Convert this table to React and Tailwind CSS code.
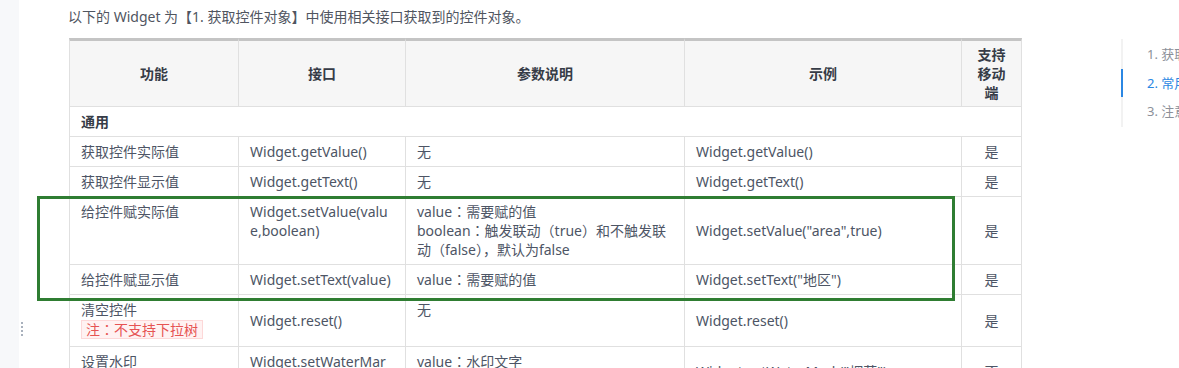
import React from 'react';

const rows = [
  {
    name: '获取控件实际值',
    api: ['Widget.getValue()'],
    params: ['无'],
    example: 'Widget.getValue()',
    mobile: '是',
  },
  {
    name: '获取控件显示值',
    api: ['Widget.getText()'],
    params: ['无'],
    example: 'Widget.getText()',
    mobile: '是',
  },
  {
    name: '给控件赋实际值',
    api: ['Widget.setValue(valu', 'e,boolean)'],
    params: ['value：需要赋的值', 'boolean：触发联动（true）和不触发联', '动（false），默认为false'],
    example: 'Widget.setValue("area",true)',
    mobile: '是',
  },
  {
    name: '给控件赋显示值',
    api: ['Widget.setText(value)'],
    params: ['value：需要赋的值'],
    example: 'Widget.setText("地区")',
    mobile: '是',
  },
  {
    name: '清空控件',
    note: '注：不支持下拉树',
    api: ['Widget.reset()'],
    apiMiddle: true,
    params: ['无'],
    example: 'Widget.reset()',
    mobile: '是',
  },
  {
    name: '设置水印',
    api: ['Widget.setWaterMar', 'k(value)'],
    params: ['value：水印文字'],
    example: 'Widget.setWaterMark("烟草")',
    mobile: '否',
  },
];

const cell = 'border-r border-b border-[#e0e0e0] px-[11px] py-[5px] leading-[19px]';

// full-width colon centred in its box
function Punct({ text }) {
  const parts = text.split('：');
  return parts.map((p, i) => (
    <React.Fragment key={i}>
      {i > 0 && <span style={{ fontFamily: '"Noto Sans CJK JP", sans-serif' }}>：</span>}
      {p}
    </React.Fragment>
  ));
}

function Lines({ items }) {
  return items.map((t, i) => (
    <React.Fragment key={i}>
      {i > 0 && <br />}
      <Punct text={t} />
    </React.Fragment>
  ));
}

export default function App() {
  return (
    <div
      className="relative flex w-[1179px] h-[368px] overflow-hidden bg-white text-[14px] text-[#4d5565]"
      style={{ fontFamily: '"Noto Sans", "Noto Sans CJK SC", sans-serif' }}
    >
      {/* side rail + drag handle */}
      <div className="w-[19px] h-full shrink-0 bg-[#f7f8fa]" />
      <div className="w-[50px] h-full shrink-0 pt-[322px] pl-[2px]">
        <div className="flex flex-col gap-[2px]">
          {[0, 1, 2, 3].map((i) => (
            <span key={i} className="block w-[2px] h-[2px] bg-[#a9b1bd]" />
          ))}
        </div>
      </div>

      {/* article */}
      <div className="w-[1052px] shrink-0 pt-[7px]">
        <p className="leading-[19px] -ml-px text-[#50555f]">
          以下的 Widget 为【1. 获取控件对象】中使用相关接口获取到的控件对象。
        </p>
        <table className="mt-[12px] w-[953px] table-fixed border-separate border-spacing-0">
          <colgroup>
            <col className="w-[170px]" />
            <col className="w-[167px]" />
            <col className="w-[279px]" />
            <col className="w-[277px]" />
            <col className="w-[60px]" />
          </colgroup>
          <thead>
            <tr className="bg-[#f6f6f6] text-[#363c47] font-bold">
              {['功能', '接口', '参数说明', '示例'].map((h, i) => (
                <th
                  key={h}
                  className={`border-t-[3px] border-t-[#c4c4c4] border-r border-b border-[#e0e0e0] py-[4px] leading-[19px] text-center ${i === 0 ? 'border-l' : ''}`}
                >
                  {h}
                </th>
              ))}
              <th className="border-t-[3px] border-t-[#c4c4c4] border-r border-b border-[#e0e0e0] py-[4px] leading-[19px] text-center">
                支持
                <br />
                移动
                <br />
                端
              </th>
            </tr>
          </thead>
          <tbody>
            <tr>
              <td colSpan={5} className={`${cell} border-l font-bold text-[#363c47]`}>
                通用
              </td>
            </tr>
            {rows.map((r) => (
              <tr key={r.name}>
                <td className={`${cell} border-l align-top`}>
                  {r.name}
                  {r.note && (
                    <div className="mt-px mb-[2px]">
                      <span className="inline-block border border-[#fdd8d8] bg-[#fff2f2] px-[4px] leading-[16px] text-[#e65353]">
                        <Punct text={r.note} />
                      </span>
                    </div>
                  )}
                </td>
                <td className={`${cell} whitespace-nowrap pr-[12px] ${r.apiMiddle ? 'align-middle' : 'align-top'}`}>
                  <Lines items={r.api} />
                </td>
                <td className={`${cell} whitespace-nowrap align-top`}>
                  <Lines items={r.params} />
                </td>
                <td className={`${cell} whitespace-nowrap align-middle`}>{r.example}</td>
                <td className={`${cell} text-center align-middle`}>{r.mobile}</td>
              </tr>
            ))}
          </tbody>
        </table>
      </div>

      {/* table of contents */}
      <div className="flex-1 pt-[39px]">
        <ul className="border-l-2 border-[#f2f2f2] text-[13px] text-[#8c9099] whitespace-nowrap pb-[2px]">
          <li className="pl-[24px] leading-[28px] py-px">1. 获取控件对象</li>
          <li className="-ml-[2px] border-l-2 border-[#2b87e3] pl-[24px] leading-[28px] text-[#2b87e3]">
            2. 常用接口
          </li>
          <li className="pl-[24px] leading-[28px]">3. 注意事项</li>
        </ul>
      </div>

      {/* highlight frame */}
      <div className="pointer-events-none absolute left-[37px] top-[196px] w-[918px] h-[105px] border-[3px] border-[#2f7d32]" />
    </div>
  );
}
